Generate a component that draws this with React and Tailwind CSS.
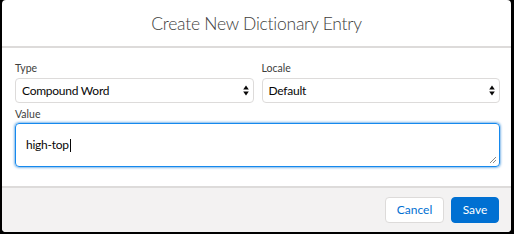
export default function App() {
  const font = { fontFamily: '"Lato", "Open Sans", sans-serif' };
  const Arrows = () => (
    <svg width="6" height="11" viewBox="0 0 6 11" className="shrink-0">
      <path d="M3 0.5 L5.8 4.5 L0.2 4.5 Z" fill="#080707" />
      <path d="M3 10.5 L5.8 6.5 L0.2 6.5 Z" fill="#080707" />
    </svg>
  );
  return (
    <div className="w-[514px] h-[234px] bg-black pl-[2px] pr-[3px] pb-[2px]" style={font}>
      <div className="w-full h-full bg-white rounded-[4px] overflow-hidden flex flex-col">
        <div className="h-[48px] shrink-0 border-b-2 border-[#dddbda] flex items-center justify-center">
          <span className="text-[17.5px] font-light tracking-[-0.25px] text-[#3e3e3c] leading-none pt-[1px]">Create New Dictionary Entry</span>
        </div>
        <div className="flex-1 pl-[13px] pr-[11px] pt-[12px]">
          <div className="flex gap-[8px]">
            <div className="flex-1 flex flex-col">
              <label className="text-[10.5px] leading-4 text-[#3e3e3c] mb-[2px]">Type</label>
              <div className="h-[25px] border border-[#dddbda] rounded-[4px] flex items-center justify-between pl-[6px] pr-[4px]">
                <span className="text-[12px] tracking-[-0.25px] text-[#080707]">Compound Word</span>
                <Arrows />
              </div>
            </div>
            <div className="flex-1 flex flex-col">
              <label className="text-[10.5px] leading-4 text-[#3e3e3c] mb-[2px]">Locale</label>
              <div className="h-[25px] border border-[#dddbda] rounded-[4px] flex items-center justify-between pl-[6px] pr-[4px]">
                <span className="text-[12px] tracking-[-0.25px] text-[#080707]">Default</span>
                <Arrows />
              </div>
            </div>
          </div>
          <div className="flex flex-col mt-[3px]">
            <label className="text-[10.5px] leading-4 text-[#3e3e3c] mb-[1px]">Value</label>
            <div className="relative h-[44px] border border-[#1589ee] rounded-[4px] shadow-[0_0_3px_#0070d2] pl-[10px] pt-[7px]">
              <span className="text-[12px] tracking-[-0.25px] text-[#080707] leading-4 inline-flex items-center">
                high-top
                <span className="inline-block w-px h-[13px] bg-[#080707] ml-[1px]" />
              </span>
              <svg width="8" height="8" viewBox="0 0 8 8" className="absolute right-[2px] bottom-[2px]">
                <path d="M1 7 L7 1 M4 7 L7 4" stroke="#8a8886" strokeWidth="1" />
              </svg>
            </div>
          </div>
        </div>
        <div className="h-[46px] shrink-0 bg-[#f3f2f2] border-t-2 border-[#dddbda] flex items-center justify-end gap-[7px] pr-[12px]">
          <button className="h-[26px] w-[59px] bg-white border border-[#dddbda] rounded-[4px] text-[12px] text-[#0070d2]">Cancel</button>
          <button className="h-[26px] w-[48px] bg-[#0070d2] border border-[#0070d2] rounded-[4px] text-[12px] text-white">Save</button>
        </div>
      </div>
    </div>
  );
}
